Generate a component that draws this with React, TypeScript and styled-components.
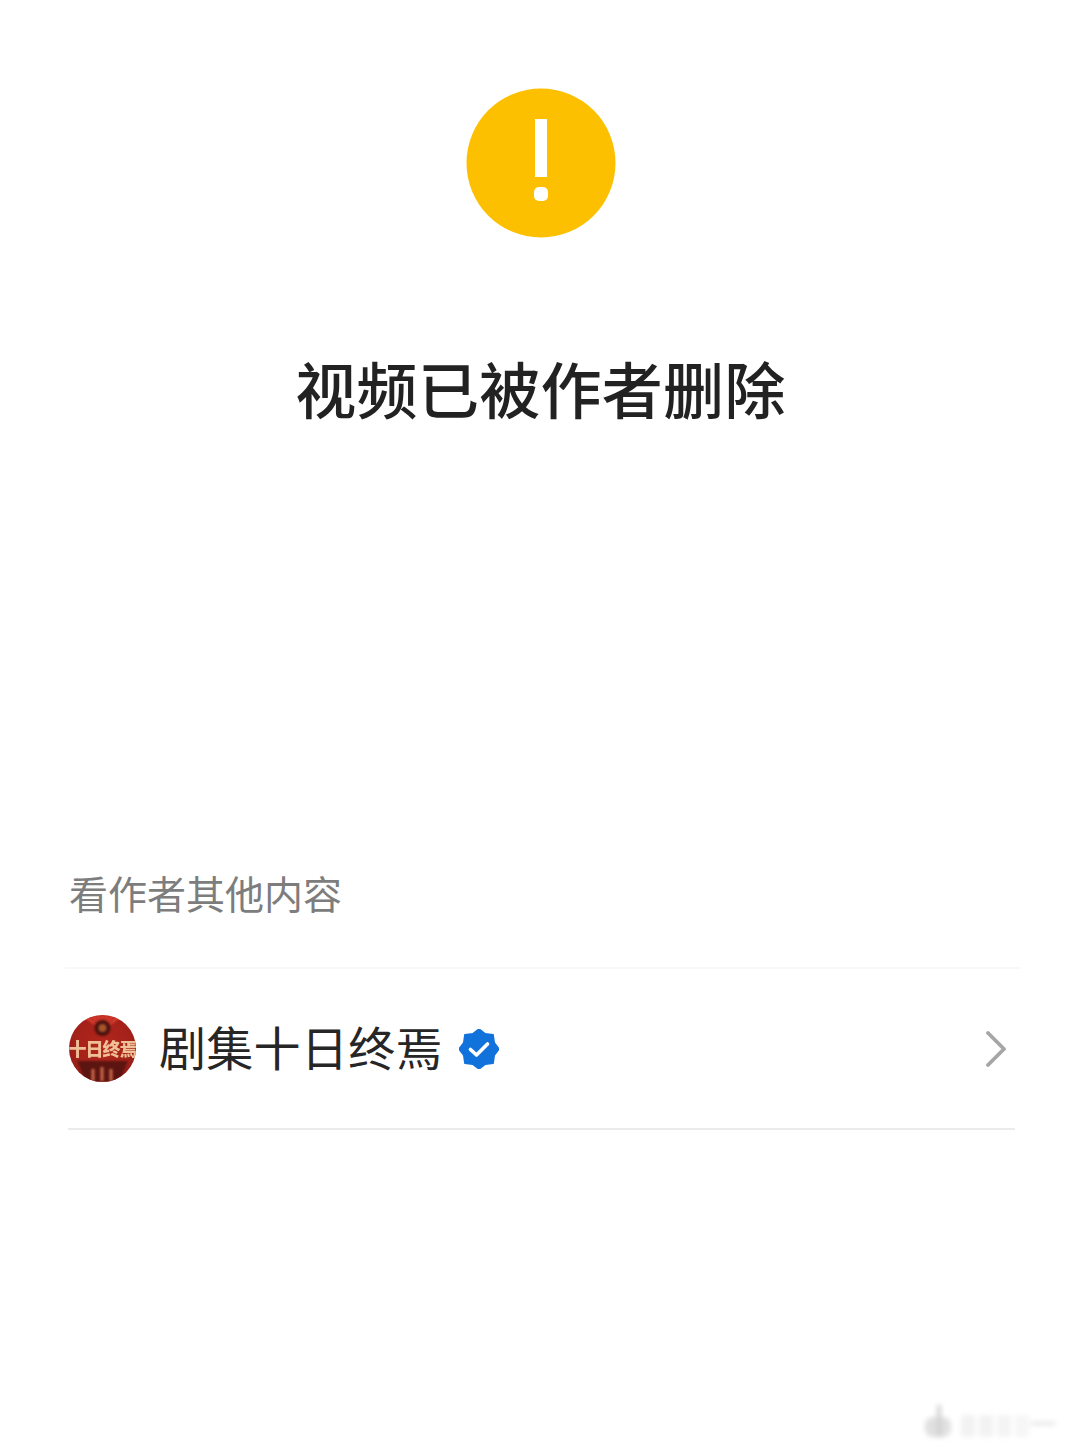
import styled, { createGlobalStyle } from "styled-components"

const GlobalStyle = createGlobalStyle`
    html, body {
        margin: 0;
        padding: 0;
        background: #ffffff;
    }
`

const Page = styled.div`
    position: relative;
    width: 1067px;
    height: 1448px;
    overflow: hidden;
    background: #ffffff;
    font-family: "Noto Sans CJK SC", "Noto Sans", sans-serif;
    display: flex;
    flex-direction: column;
`

const Notice = styled.div`
    display: flex;
    flex-direction: column;
    align-items: center;
    padding: 88px 0 0 14px;
`

const Title = styled.h1`
    margin: 105px 0 0;
    font-size: 61px;
    line-height: 90px;
    font-weight: 500;
    letter-spacing: 0.3px;
    color: #222222;
    white-space: nowrap;
`

const Section = styled.section`
    margin-top: 431px;
    display: flex;
    flex-direction: column;
`

const SectionLabel = styled.div`
    padding-left: 69px;
    font-size: 39px;
    line-height: 56px;
    font-weight: 400;
    color: #7d7d7d;
    white-space: nowrap;
`

const Divider = styled.div<{ $left: number; $right: number; $color: string; $top?: number }>`
    height: 2px;
    margin: ${(p) => p.$top ?? 0}px ${(p) => p.$right}px 0 ${(p) => p.$left}px;
    background: ${(p) => p.$color};
`

const AuthorRow = styled.div`
    height: 159px;
    display: flex;
    align-items: center;
    padding: 0 60px 0 69px;
`

const Avatar = styled.div`
    position: relative;
    width: 67px;
    height: 67px;
    border-radius: 50%;
    overflow: hidden;
    flex-shrink: 0;
    background: radial-gradient(circle at 50% 45%, #b3261c 0%, #a3211a 60%, #6d1410 100%);
`

const AvatarArt = styled.svg`
    position: absolute;
    inset: 0;
    filter: blur(0.8px);
`

const AvatarText = styled.span`
    position: absolute;
    left: -2px;
    right: -2px;
    top: 21px;
    text-align: center;
    font-size: 18px;
    line-height: 24px;
    font-weight: 900;
    letter-spacing: -1px;
    color: #efc096;
    white-space: nowrap;
    filter: blur(0.4px);
`

const AuthorName = styled.span`
    margin: 0 0 6px 23px;
    font-size: 47px;
    line-height: 64px;
    font-weight: 400;
    letter-spacing: 0.3px;
    color: #262626;
    white-space: nowrap;
`

const Badge = styled.svg`
    margin-left: 16px;
    flex-shrink: 0;
`

const Chevron = styled.svg`
    margin-left: auto;
    flex-shrink: 0;
`

const Watermark = styled.svg`
    position: absolute;
    right: 6px;
    bottom: 3px;
    filter: blur(2.5px);
`

const WarningIcon = () => (
    <svg width="150" height="150" viewBox="0 0 150 150">
        <circle cx="75" cy="75" r="74.5" fill="#fdc000" />
        <rect x="69" y="31" width="12" height="58" fill="#ffffff" />
        <rect x="68" y="99" width="14" height="14" rx="5" fill="#ffffff" />
    </svg>
)

const badgePoints = Array.from({ length: 16 }, (_, i) => {
    const radius = i % 2 === 0 ? 20 : 16.5
    const angle = (Math.PI * i) / 8 - Math.PI / 2
    return `${20 + radius * Math.cos(angle)},${20 + radius * Math.sin(angle)}`
}).join(" ")

const rays = [-48, -32, -16, 0, 16, 32, 48]

export default function App() {
    return (
        <Page>
            <GlobalStyle />
            <Notice>
                <WarningIcon />
                <Title>视频已被作者删除</Title>
            </Notice>
            <Section>
                <SectionLabel>看作者其他内容</SectionLabel>
                <Divider $left={65} $right={47} $color="#f8f8f8" $top={47} />
                <AuthorRow>
                    <Avatar>
                        <AvatarArt width="67" height="67" viewBox="0 0 67 67">
                            {rays.map((deg) => (
                                <path key={deg} d="M33.5 16 L31 -12 L36 -12 Z" fill="#df4030" transform={`rotate(${deg} 33.5 16)`} />
                            ))}
                            <circle cx="33.5" cy="13" r="8" fill="#4a120e" />
                            <circle cx="33.5" cy="13" r="4" fill="#a8552c" />
                            <path d="M8 46 H59 L50 67 H17 Z" fill="#5c1410" />
                            <path d="M24 54 V66 M33 52 V66 M42 54 V66" stroke="#c9694a" strokeWidth="3" />
                        </AvatarArt>
                        <AvatarText>十日终焉</AvatarText>
                    </Avatar>
                    <AuthorName>剧集十日终焉</AuthorName>
                    <Badge width="40" height="40" viewBox="0 0 40 40">
                        <polygon points={badgePoints} fill="#1272dc" stroke="#1272dc" strokeWidth="1.5" strokeLinejoin="round" />
                        <path d="M11.5 20.5 L17.5 26 L28.5 15" fill="none" stroke="#ffffff" strokeWidth="3.6" strokeLinecap="round" strokeLinejoin="round" />
                    </Badge>
                    <Chevron width="22" height="36" viewBox="0 0 22 36">
                        <path d="M3 2 L19 18 L3 34" fill="none" stroke="#a6a6a6" strokeWidth="3.8" strokeLinecap="round" strokeLinejoin="round" />
                    </Chevron>
                </AuthorRow>
                <Divider $left={68} $right={52} $color="#ebebeb" />
            </Section>
            <Watermark width="150" height="44" viewBox="0 0 150 44">
                <rect x="14" y="16" width="26" height="20" rx="8" fill="#e0e0e0" />
                <rect x="26" y="4" width="4" height="32" fill="#cfcfcf" />
                <rect x="50" y="14" width="14" height="22" rx="3" fill="#f2f2f2" />
                <rect x="68" y="14" width="14" height="22" rx="3" fill="#f2f2f2" />
                <rect x="86" y="14" width="14" height="22" rx="3" fill="#f4f4f4" />
                <rect x="104" y="14" width="14" height="22" rx="3" fill="#f6f6f6" />
                <rect x="120" y="21" width="24" height="3" fill="#e2e2e2" />
            </Watermark>
        </Page>
    )
}
